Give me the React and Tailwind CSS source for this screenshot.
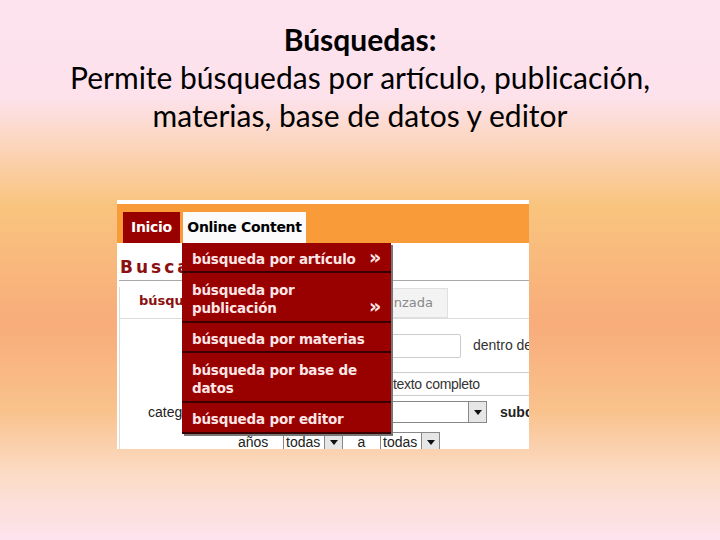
import React from 'react';

const menuItems = [
    {lines: ['búsqueda por artículo'], arrow: true, h: 'h-[30px]'},
    {lines: ['búsqueda por', 'publicación'], arrow: true, h: 'h-[50px]'},
    {lines: ['búsqueda por materias'], arrow: false, h: 'h-[30px]'},
    {lines: ['búsqueda por base de', 'datos'], arrow: false, h: 'h-[50px]'},
    {lines: ['búsqueda por editor'], arrow: false, h: 'h-[31px]'},
];

function SelectArrow() {
    return (
        <div className="w-[18px] h-full shrink-0 flex items-center justify-center bg-[#e6e6e6] border-l border-[#888]">
            <svg width="8" height="5" viewBox="0 0 8 5">
                <path d="M0 0h8L4 5z" fill="#111"/>
            </svg>
        </div>
    );
}

function Screenshot() {
    return (
        <div className="relative w-[412px] h-[249px] overflow-hidden bg-white font-['Liberation_Sans',Arial,sans-serif]">
            <div className="h-[4px] bg-white"/>
            {/* barra naranja con pestañas */}
            <div className="h-[39px] bg-[#f99b38] flex items-end pl-[6px] gap-[3px]">
                <div className="h-[31px] w-[57px] bg-[#990000] flex items-center justify-center text-white font-bold text-[14px] font-['DejaVu_Sans',sans-serif] tracking-[-0.3px]">
                    Inicio
                </div>
                <div className="h-[31px] w-[123px] bg-[#fbfbfb] flex items-center justify-center text-black font-bold text-[14px] font-['DejaVu_Sans',sans-serif] tracking-[-0.3px]">
                    Online Content
                </div>
            </div>
            <div className="pl-[2px]">
                <div className="h-[38px] flex items-end pl-[1px] pb-[4px] border-b border-[#aaa]">
                    <div className="w-[62px] overflow-hidden whitespace-nowrap text-[#8b1010] font-bold text-[17px] tracking-[3px] font-['DejaVu_Sans',sans-serif] leading-none">
                        Buscar
                    </div>
                </div>
                <div className="mt-[6px] border-l border-[#ddd]">
                    <div className="h-[32px] flex border-b border-[#ddd]">
                        <div className="w-[266px] shrink-0 pl-[19px] pt-[4px]">
                            <div className="w-[44px] overflow-hidden whitespace-nowrap text-[#8b1010] font-bold text-[13px] font-['DejaVu_Sans',sans-serif]">
                                búsqueda
                            </div>
                        </div>
                        <div className="mt-[1px] w-[62px] h-[30px] bg-[#f3f3f3] border border-[#e0e0e0] flex items-center justify-end pr-[14px] text-[#888] text-[13px] font-['DejaVu_Sans',sans-serif]">
                            nzada
                        </div>
                    </div>
                    <div className="h-[53px] flex items-center">
                        <div className="ml-[266px] shrink-0 w-[75px] h-[24px] border border-[#ccc] rounded-[2px]"/>
                        <div className="ml-[12px] text-[14px] text-[#333] whitespace-nowrap">dentro de</div>
                    </div>
                    <div className="ml-[266px] h-[24px] border-y border-[#ccc] flex items-center pl-[7px] text-[14px] text-[#333] tracking-[-0.3px]">
                        texto completo
                    </div>
                    <div className="h-[32px] flex items-center">
                        <div className="pl-[28px] w-[120px] shrink-0">
                            <div className="w-[35px] overflow-hidden whitespace-nowrap text-[14px] text-[#222]">categoría</div>
                        </div>
                        <div className="ml-[10px] shrink-0 w-[237px] h-[22px] border border-[#888] flex justify-end">
                            <SelectArrow/>
                        </div>
                        <div className="ml-[13px] shrink-0 text-[14px] font-bold text-[#222] whitespace-nowrap">subcategoría</div>
                    </div>
                    <div className="mt-[3px] h-[22px] flex items-center text-[14px] text-[#222]">
                        <div className="ml-[118px] w-[45px] shrink-0">años</div>
                        <div className="w-[60px] h-[21px] shrink-0 border border-[#888] flex">
                            <div className="flex-1 pl-[2px] leading-[19px]">todas</div>
                            <SelectArrow/>
                        </div>
                        <div className="w-[37px] shrink-0 text-center">a</div>
                        <div className="w-[60px] h-[21px] shrink-0 border border-[#888] flex">
                            <div className="flex-1 pl-[2px] leading-[19px]">todas</div>
                            <SelectArrow/>
                        </div>
                    </div>
                </div>
            </div>

            {/* menú desplegable */}
            <div className="absolute left-[65px] top-[43px] w-[209px] flex flex-col bg-[#990000] shadow-[2px_2px_0_#777] font-['DejaVu_Sans',sans-serif]">
                {menuItems.map((item, i) => (
                    <div key={i} className={`${item.h} relative flex flex-col justify-center pl-[10px] pt-[3px] border-b-2 border-[#3a0000] text-[#fde6e6] font-bold text-[13.5px] tracking-[-0.2px] leading-[18px]`}>
                        {item.lines.map((l, j) => <div key={j}>{l}</div>)}
                        {item.arrow && (
                            <div className={`absolute right-[10px] ${item.lines.length > 1 ? 'bottom-[5px]' : 'top-[4px]'} text-[19px] leading-[20px]`}>»</div>
                        )}
                    </div>
                ))}
            </div>
        </div>
    );
}

export default function App() {
    return (
        <div className="w-[720px] h-[540px] overflow-hidden bg-[linear-gradient(to_bottom,#fde3ee_0%,#fde2ec_18%,#f9c47e_38%,#f8ac7a_60%,#f9c28c_76%,#fbdcc7_88%,#fde3ee_100%)]">
            <div className="pt-[20px] text-center text-black font-['Lato',sans-serif] text-[30px] leading-[38px]">
                <div className="font-bold">Búsquedas:</div>
                <div>Permite búsquedas por artículo, publicación,</div>
                <div>materias, base de datos y editor</div>
            </div>
            <div className="ml-[117px] mt-[66px]">
                <Screenshot/>
            </div>
        </div>
    );
}
